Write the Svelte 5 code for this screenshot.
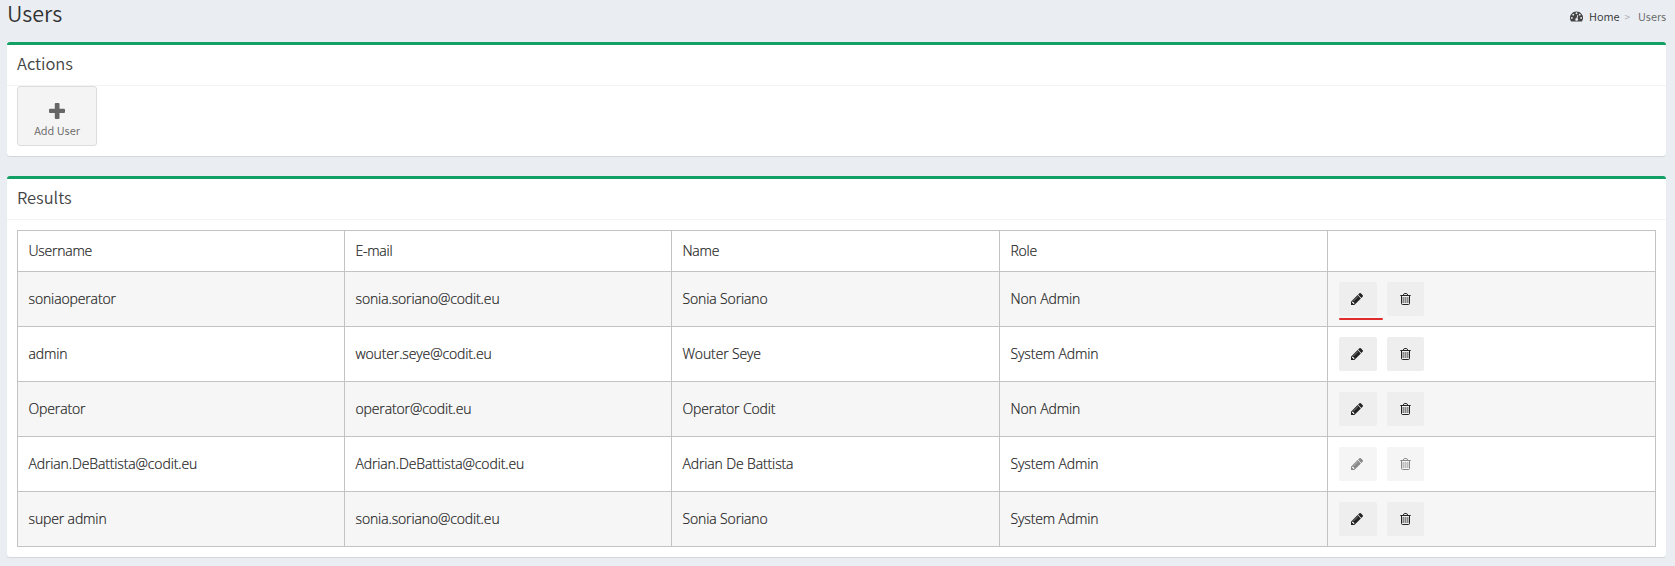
<script>
  const headers = ['Username', 'E-mail', 'Name', 'Role', ''];
  const users = [
    { username: 'soniaoperator', email: 'sonia.soriano@codit.eu', name: 'Sonia Soriano', role: 'Non Admin', marked: true },
    { username: 'admin', email: 'wouter.seye@codit.eu', name: 'Wouter Seye', role: 'System Admin' },
    { username: 'Operator', email: 'operator@codit.eu', name: 'Operator Codit', role: 'Non Admin' },
    { username: 'Adrian.DeBattista@codit.eu', email: 'Adrian.DeBattista@codit.eu', name: 'Adrian De Battista', role: 'System Admin', disabled: true },
    { username: 'super admin', email: 'sonia.soriano@codit.eu', name: 'Sonia Soriano', role: 'System Admin' }
  ];
</script>

<div class="page">
  <header class="top">
    <h1>Users</h1>
    <nav>
      <svg class="dash" width="13" height="11" viewBox="0 0 1792 1408" aria-hidden="true">
        <path fill="currentColor" fill-rule="evenodd" d="M896 0a896 896 0 0 1 755 1379q-19 29-54 29H195q-35 0-54-29A896 896 0 0 1 896 0zM256 768a128 128 0 1 0 0 256 128 128 0 0 0 0-256zM448 320a128 128 0 1 0 0 256 128 128 0 0 0 0-256zM896 128a128 128 0 1 0 0 256 128 128 0 0 0 0-256zM1344 320a128 128 0 1 0 0 256 128 128 0 0 0 0-256zM1536 768a128 128 0 1 0 0 256 128 128 0 0 0 0-256zM1004 541l-101 382q-60 5-107 43.500t-63 98.500q-20 77 20 146t117 89 146-20 89-117q16-60-6-117t-72-91l101-382q6-26-7.500-48.500t-38.500-29.500-48 6.500-30 39.500z" />
      </svg>
      <a href="#home">Home</a><span class="sep">&gt;</span><span class="current">Users</span>
    </nav>
  </header>

  <section class="box actions">
    <h3>Actions</h3>
    <button class="app">
      <svg width="16" height="16" viewBox="0 0 16 16" aria-hidden="true">
        <path fill="currentColor" d="M7 0h2.500q1 0 1 1v4.700h4.500q1 0 1 1v2.300q0 1-1 1h-4.500v5q0 1-1 1H6.800q-1 0-1-1v-5H1q-1 0-1-1V6.700q0-1 1-1h4.800V1q0-1 1-1z" />
      </svg>
      <span>Add User</span>
    </button>
  </section>

  <section class="box results">
    <h3>Results</h3>
    <table>
      <colgroup>
        <col class="narrow" /><col class="narrow" /><col /><col /><col />
      </colgroup>
      <thead>
        <tr>{#each headers as h}<th>{h}</th>{/each}</tr>
      </thead>
      <tbody>
        {#each users as u}
          <tr>
            <td>{u.username}</td>
            <td>{u.email}</td>
            <td>{u.name}</td>
            <td>{u.role}</td>
            <td>
              <div class="tools">
                <button class="edit" class:marked={u.marked} disabled={u.disabled} aria-label="Edit">
                  <svg width="12" height="12" viewBox="0 0 1515 1515" aria-hidden="true">
                    <path fill="currentColor" fill-rule="evenodd" d="M363 1387l91-91-235-235-91 91v107h128v128h107zM886 459q0-22-22-22-10 0-17 7L305 986q-7 7-7 17 0 22 22 22 10 0 17-7l542-542q7-7 7-17zM832 267l416 416-832 832H0v-416zM1515 363q0 53-37 90l-166 166-416-416 166-165q36-38 90-38 53 0 91 38l235 234q37 39 37 91z" />
                  </svg>
                </button>
                <button class="remove" disabled={u.disabled} aria-label="Delete">
                  <svg width="11" height="12" viewBox="0 0 11 12" aria-hidden="true">
                    <path fill="none" stroke="currentColor" d="M.3 2.500h10.400M3.300 2.300l.5-1.300q.2-.5.8-.5h1.800q.6 0 .8.500l.5 1.300M1.500 2.500v7.800q0 1.200 1 1.200h6q1 0 1-1.200V2.500" />
                    <path fill="none" stroke="currentColor" opacity=".35" d="M3.500 4v6M5.500 4v6M7.500 4v6" />
                    <path fill="currentColor" opacity=".25" d="M2 4h7v6H2z" />
                  </svg>
                </button>
              </div>
            </td>
          </tr>
        {/each}
      </tbody>
    </table>
  </section>
</div>

<style>
  :global(body) { margin: 0; background: #eaeef3; }
  * { box-sizing: border-box; }
  .page {
    height: 566px;
    padding: 0 9px 0 7px;
    background: #eaeef3;
    color: #333;
    font-family: "Noto Sans CJK SC", "Noto Sans", sans-serif;
  }
  .top { height: 42px; display: flex; justify-content: space-between; }
  h1 { margin: 0; font-size: 21.500px; font-weight: 350; line-height: 25px; }
  nav { display: flex; align-items: center; height: 32px; font-size: 11px; font-weight: 350; color: #666; letter-spacing: -.05px; }
  .dash { color: #444; margin-right: 6px; }
  nav a { color: #333; text-decoration: none; }
  .sep { color: #aaa; margin: 0 8px 0 5px; font-size: 10px; }
  .box {
    background: #fff;
    border-top: 3px solid #13a066;
    border-radius: 3px;
    box-shadow: 0 1px 1px rgba(0, 0, 0, .1);
  }
  .actions { height: 114px; margin-bottom: 20px; }
  .results { height: 381px; }
  h3 {
    margin: 0;
    height: 41px;
    padding: 0 10px;
    border-bottom: 1px solid #f4f4f4;
    font-size: 16.500px;
    font-weight: 350;
    line-height: 36px;
    letter-spacing: -.05px;
    color: #444;
  }
  button { border: 0; padding: 0; font-family: inherit; }
  .app {
    width: 80px;
    height: 60px;
    margin-left: 10px;
    display: flex;
    flex-direction: column;
    align-items: center;
    padding-top: 16px;
    background: #f4f4f4;
    border: 1px solid #ddd;
    border-radius: 3px;
    color: #666;
    font-size: 11px;
    font-weight: 350;
  }
  .app svg { flex: none; }
  .app span { line-height: 16px; margin-top: 3px; color: #666; }
  table {
    width: 1639px;
    margin: 10px 0 0 10px;
    table-layout: fixed;
    border-collapse: collapse;
    font: 14px "Open Sans", "Noto Sans", sans-serif;
    font-weight: 300;
    letter-spacing: -.13px;
    -webkit-text-stroke: .2px #222;
    color: #222;
  }
  .narrow { width: 327px; }
  th, td { border: 1px solid #c3c3c3; padding: 0 0 1px 11px; text-align: left; font-weight: inherit; }
  th:not(:last-child), td:not(:last-child) { padding-left: 10.500px; padding-bottom: 1px; }
  th { height: 41px; letter-spacing: -.25px; }
  td { height: 55px; }
  td:last-child { padding-bottom: 0; }
  tbody tr:nth-child(odd) { background: #f6f6f6; }
  .tools { display: flex; gap: 10px; }
  .tools button {
    height: 34px;
    display: flex;
    align-items: center;
    justify-content: center;
    background: #eee;
    border-radius: 2px;
    color: #222;
  }
  .tools .edit { width: 38px; position: relative; padding-right: 2px; }
  .tools .remove { width: 37px; padding-right: 1px; }
  .tools button:disabled { background: #f5f5f5; color: #888; }
  .marked::after {
    content: "";
    position: absolute;
    left: 0;
    top: 36px;
    width: 44px;
    height: 2px;
    border-radius: 1px;
    background: #e02b2b;
  }
</style>
